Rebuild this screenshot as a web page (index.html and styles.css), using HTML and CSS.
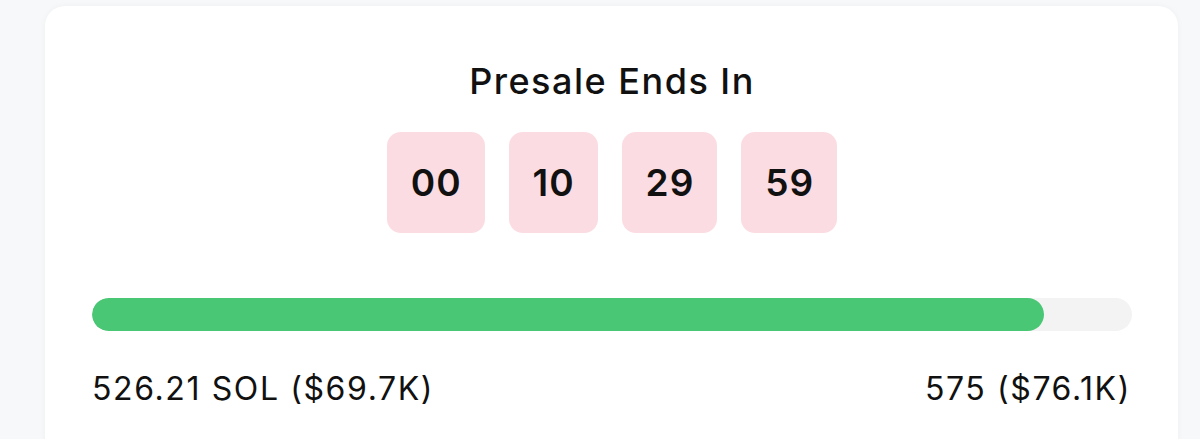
FILE: index.html
```html
<!DOCTYPE html>
<html>
<head>
<meta charset="utf-8">
<link rel="stylesheet" href="styles.css">
</head>
<body>
<div class="page">
  <div class="card">
    <h2 class="title">Presale Ends In</h2>
    <div class="timer">
      <div class="cell">00</div>
      <div class="cell">10</div>
      <div class="cell">29</div>
      <div class="cell">59</div>
    </div>
    <div class="track"><div class="fill" style="width:91.5%"></div></div>
    <div class="stats">
      <span>526.21 SOL ($69.7K)</span>
      <span>575 ($76.1K)</span>
    </div>
  </div>
</div>
</body>
</html>
```

FILE: styles.css
```css
html, body {
  margin: 0;
  padding: 0;
  background: #f7f8fa;
  font-family: Inter, "Noto Sans", sans-serif;
  color: #111;
  overflow: hidden;
}
.page {
  padding: 6px 22px 0 45px;
}
.card {
  background: #fff;
  border-radius: 20px;
  box-shadow: 0 0 6px rgba(0,0,0,0.04);
  padding: 53px 46px 40px 47px;
  height: 500px;
}
.title {
  margin: 0;
  text-align: center;
  font-size: 36px;
  font-weight: 500;
  letter-spacing: 1.5px;
  line-height: 44px;
}
.timer {
  display: flex;
  justify-content: center;
  gap: 24px;
  margin-top: 29px;
}
.cell {
  background: #fbdce2;
  border-radius: 14px;
  padding: 0 23px 0 24px;
  height: 101px;
  display: flex;
  align-items: center;
  font-size: 37px;
  font-weight: 600;
  letter-spacing: 1px;
}
.track {
  margin-top: 65px;
  height: 33px;
  border-radius: 17px;
  background: #f3f3f4;
  overflow: hidden;
}
.fill {
  height: 100%;
  background: #4ac775;
  border-radius: 17px;
}
.stats {
  display: flex;
  justify-content: space-between;
  margin-top: 38px;
  font-size: 32px;
  letter-spacing: 1.6px;
  line-height: 40px;
  padding-right: 1px;
}
```
